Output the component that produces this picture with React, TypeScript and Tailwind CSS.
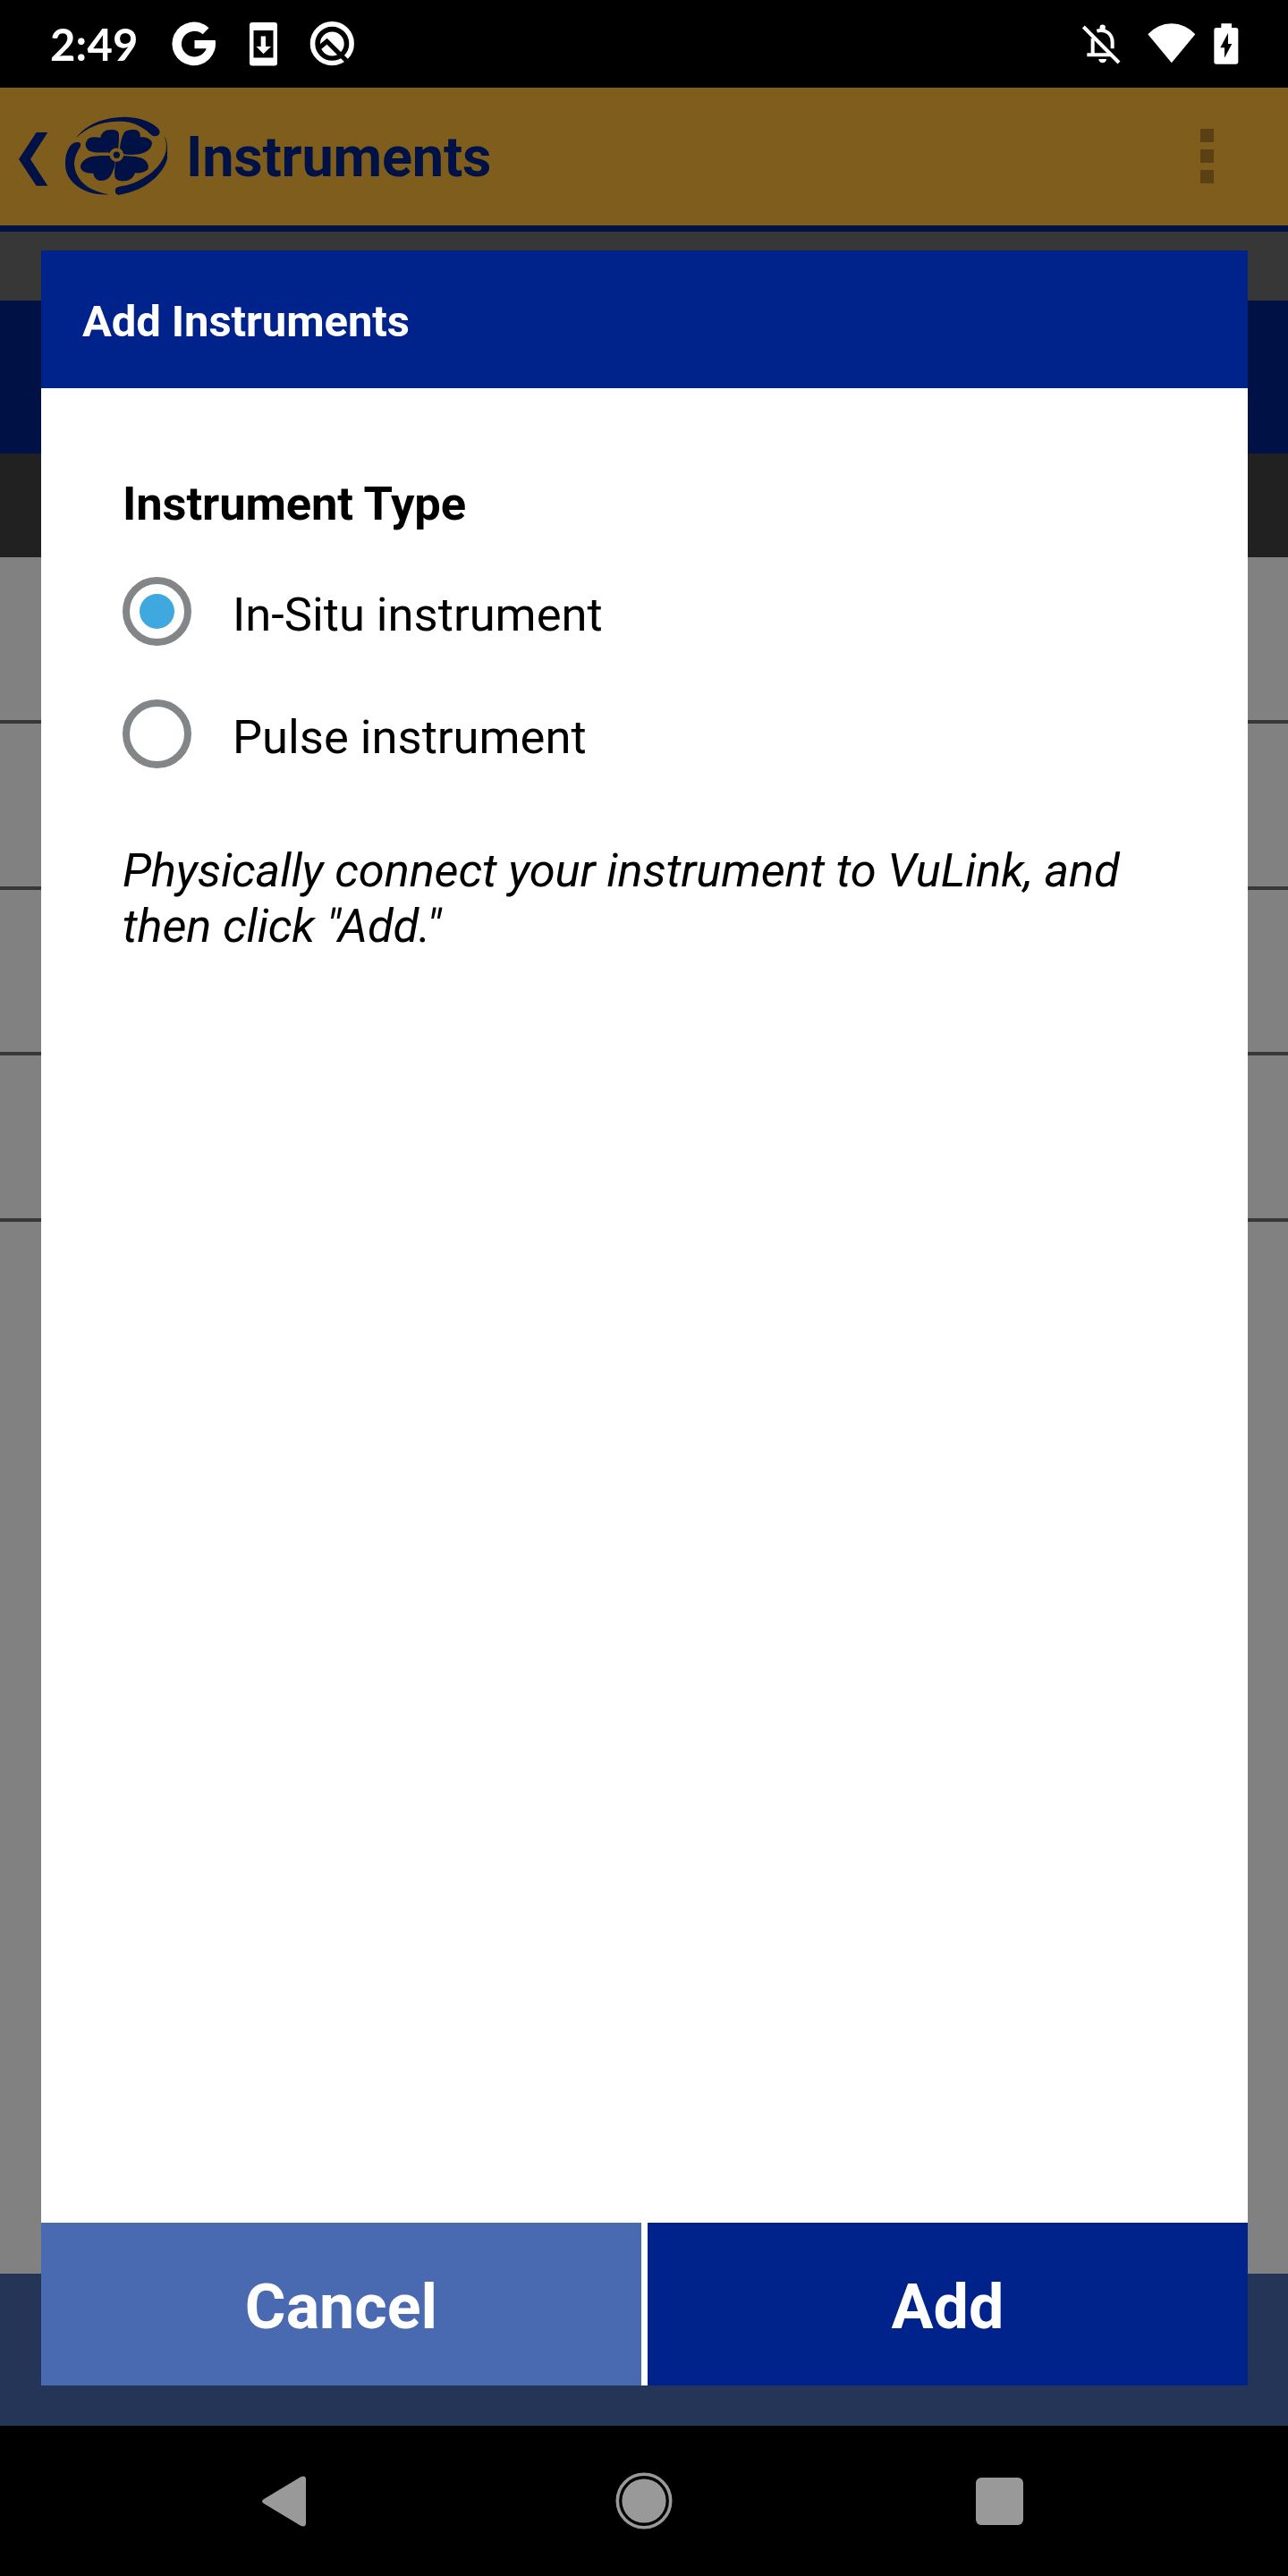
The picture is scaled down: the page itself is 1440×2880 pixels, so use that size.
import React, { useState } from "react";

function StatusBar() {
  return (
    <div className="flex h-[98px] shrink-0 items-start bg-black text-white">
      <span className="mt-[24px] ml-[56px] w-[134px] font-['Lato',sans-serif] text-[49px] leading-[50px] font-bold tracking-[0.2px]">2:49</span>
      <svg className="mt-[20px]" width="54" height="58" viewBox="0 0 54 58" fill="currentColor">
        <path d="M43.5 11.3 36.7 18.2A14.4 14.4 0 1 0 40.8 34.3H27.5V25H50.7A24.3 24.3 0 1 1 43.5 11.3Z" />
      </svg>
      <svg className="mt-[20px] ml-[30px]" width="42" height="58" viewBox="0 0 42 58" fill="currentColor">
        <path
          fillRule="evenodd"
          d="M8 5H33a3 3 0 0 1 3 3V50.5a3 3 0 0 1-3 3H8a3 3 0 0 1-3-3V8a3 3 0 0 1 3-3ZM9.5 14V44.5H31.5V14ZM17.7 20.5V32H12.5L20.5 40.3 29 32H23V20.5Z"
        />
      </svg>
      <svg className="mt-[20px] ml-[26px]" width="58" height="58" viewBox="0 0 58 58" fill="none">
        <circle cx="29.3" cy="28.7" r="21.8" stroke="white" strokeWidth="5.6" />
        <circle cx="29.3" cy="29" r="13.4" fill="white" />
        <path d="M15.5 33 23.5 26.2 48 50.5" stroke="black" strokeWidth="5.2" />
      </svg>
      <svg className="mt-[24px] ml-[809px]" width="50" height="50" viewBox="86 72 150 150" fill="none">
        <path d="M124 128V184M105 184H194M138 104C168 96 190 114 190 142V163" stroke="white" strokeWidth="12" />
        <circle cx="157" cy="92" r="9.5" fill="white" />
        <path d="M144 198H170A13 13 0 0 1 144 198Z" fill="white" />
        <path d="M98 85 218 205" stroke="black" strokeWidth="12" />
        <path d="M93 90 212 210" stroke="white" strokeWidth="12" />
      </svg>
      <svg className="mt-[24px] ml-[22px]" width="58" height="50" viewBox="302 72 174 150" fill="currentColor">
        <path d="M388.500 211 309 115A105.800 105.800 0 0 1 468 115Z" />
      </svg>
      <svg className="mt-[24px] ml-[16px]" width="34" height="50" viewBox="524 72 102 150" fill="currentColor">
        <path
          fillRule="evenodd"
          d="M555 79H590V93H604a8 8 0 0 1 8 8V207a8 8 0 0 1-8 8H539a8 8 0 0 1-8-8V101a8 8 0 0 1 8-8H555ZM578 111 552 160H566V194L591 147H578Z"
        />
      </svg>
    </div>
  );
}

function FlowerLogo() {
  return (
    <svg className="mt-[28px] ml-[16px] text-[#001245]" width="120" height="96" viewBox="210 108 360 288" fill="currentColor">
      <path d="M397 228C398 205 402 180 396 172C388 163 372 164 362 166C348 169 337 182 337 192C318 188 300 188 292 200C284 212 286 228 300 236C318 244 345 241 368 242Q374 232 385 228Z" />
      <path d="M402 228C404 205 410 185 417 174C425 163 448 164 456 166C468 169 472 182 470 190C490 188 506 196 510 208C510 225 497 238 480 243C460 250 435 250 414 247C412 238 408 232 402 228Z" />
      <path d="M368 252C350 252 315 252 298 258C282 265 270 277 270 290C272 305 290 312 313 311C315 326 325 336 340 336C358 336 370 325 376 310C382 297 386 285 386 270Q372 264 368 252Z" />
      <path d="M414 252C440 253 470 256 482 264C494 272 500 285 497 296C490 306 470 312 452 310C450 322 440 333 425 336C405 340 388 336 385 322C383 305 386 285 388 271Q408 270 414 252Z" />
      <circle cx="391" cy="249.500" r="23" fill="#7f5d1c" />
      <circle cx="391" cy="249.500" r="11" />
      <path d="M255 193C290 145 350 123 420 122C470 124 515 140 532 163C542 178 530 188 518 187C505 185 500 172 482 162C455 143 430 136 395 137C335 139 290 158 255 193Z" />
      <path d="M262 207C272 208 272 217 268 224C255 245 250 260 249 280C252 330 290 370 365 382C300 388 240 355 224 310C215 280 218 245 235 220C243 210 252 206 262 207Z" />
      <path d="M550 184C559 200 561 212 561 225V262C550 310 490 370 402 383C388 385 384 372 388 362C395 354 420 355 445 345C505 322 548 280 557 235C560 215 556 200 550 184Z" />
    </svg>
  );
}

function Toolbar() {
  return (
    <header className="flex h-[161px] shrink-0 items-start border-b-[7px] border-[#001245] bg-[#7f5d1c]">
      <svg className="mt-[50px] ml-[21px]" width="33" height="60" viewBox="63 174 99 180">
        <path d="M122 174H160L102 264 160 353H122L63 264Z" fill="#001245" />
      </svg>
      <FlowerLogo />
      <h1 className="mt-[39px] ml-[18px] text-[63px] leading-[78px] font-bold tracking-[-0.2px] text-[#001245]">Instruments</h1>
      <div className="mt-[46px] mr-[83px] ml-auto flex flex-col gap-2">
        <i className="size-[15px] bg-[#5a4013]" />
        <i className="size-[15px] bg-[#5a4013]" />
        <i className="size-[15px] bg-[#5a4013]" />
      </div>
    </header>
  );
}

function Backdrop() {
  return (
    <div className="flex grow flex-col bg-[#818181]">
      <div className="h-[77px] bg-[#373738]" />
      <div className="h-[171px] bg-[#001245]" />
      <div className="h-[116px] bg-[#212121]" />
      <div className="h-[186px] border-b-4 border-[#383838]" />
      <div className="h-[186px] border-b-4 border-[#383838]" />
      <div className="h-[185px] border-b-4 border-[#383838]" />
      <div className="h-[186px] border-b-4 border-[#383838]" />
      <div className="mt-auto h-[170px] bg-[#253558]" />
    </div>
  );
}

function RadioRow({ label, checked, onSelect }: { label: string; checked: boolean; onSelect: () => void }) {
  return (
    <button type="button" role="radio" aria-checked={checked} onClick={onSelect} className="flex h-[77px] items-center text-left">
      <span className="flex size-[77px] items-center justify-center rounded-full border-8 border-[#828689]">
        {checked && <span className="size-[39px] rounded-full bg-[#3fa9df]" />}
      </span>
      <span className="ml-[46px] pt-[6px] text-[52.5px] leading-[62px]">{label}</span>
    </button>
  );
}

function AddInstrumentsDialog() {
  const [type, setType] = useState("in-situ");
  return (
    <section role="dialog" className="absolute top-[280px] left-[46px] flex h-[2387px] w-[1349px] flex-col bg-white text-black">
      <h2 className="h-[154px] bg-[#00238b] pt-[49px] pl-[46px] text-[49px] leading-[62px] font-bold tracking-[-0.1px] text-white">Add Instruments</h2>
      <div className="flex grow flex-col px-[91px] pt-[98px]">
        <h3 className="text-[52.5px] leading-[62px] font-bold tracking-[-0.12px]">Instrument Type</h3>
        <div role="radiogroup" className="mt-[51px] flex flex-col gap-[60px]">
          <RadioRow label="In-Situ instrument" checked={type === "in-situ"} onSelect={() => setType("in-situ")} />
          <RadioRow label="Pulse instrument" checked={type === "pulse"} onSelect={() => setType("pulse")} />
        </div>
        <p className="mt-[83px] text-[52.5px] leading-[62px] tracking-[-0.16px] italic">
          Physically connect your instrument to VuLink, and
          <br />
          then click "Add."
        </p>
      </div>
      <div className="flex h-[182px] gap-[7px] text-[70px] leading-[82px] font-bold text-white">
        <button type="button" className="flex-1 bg-[#4969b0] pt-[6px]">Cancel</button>
        <button type="button" className="flex-1 bg-[#00238b] pt-[6px]">Add</button>
      </div>
    </section>
  );
}

function NavigationBar() {
  return (
    <nav className="flex h-[168px] shrink-0 items-center bg-black pl-[293px] text-[#999999]">
      <svg width="49" height="57" viewBox="0 0 49 57" fill="currentColor">
        <path d="M2 26 43.500 1Q49-.8 49 4V53Q49 57.800 43.500 56L2 31Q-2 28.500 2 26Z" />
      </svg>
      <svg className="ml-[346px]" width="64" height="64" viewBox="0 0 64 64">
        <circle cx="32" cy="32" r="29.700" fill="none" stroke="currentColor" strokeWidth="3.600" />
        <circle cx="32" cy="32" r="24.600" fill="currentColor" />
      </svg>
      <div className="ml-[339px] size-[53px] rounded-[6px] bg-[#999999]" />
    </nav>
  );
}

export default function App() {
  return (
    <div className="relative flex h-[2880px] w-[1440px] flex-col overflow-hidden font-['Roboto',sans-serif]">
      <StatusBar />
      <Toolbar />
      <Backdrop />
      <NavigationBar />
      <AddInstrumentsDialog />
    </div>
  );
}
